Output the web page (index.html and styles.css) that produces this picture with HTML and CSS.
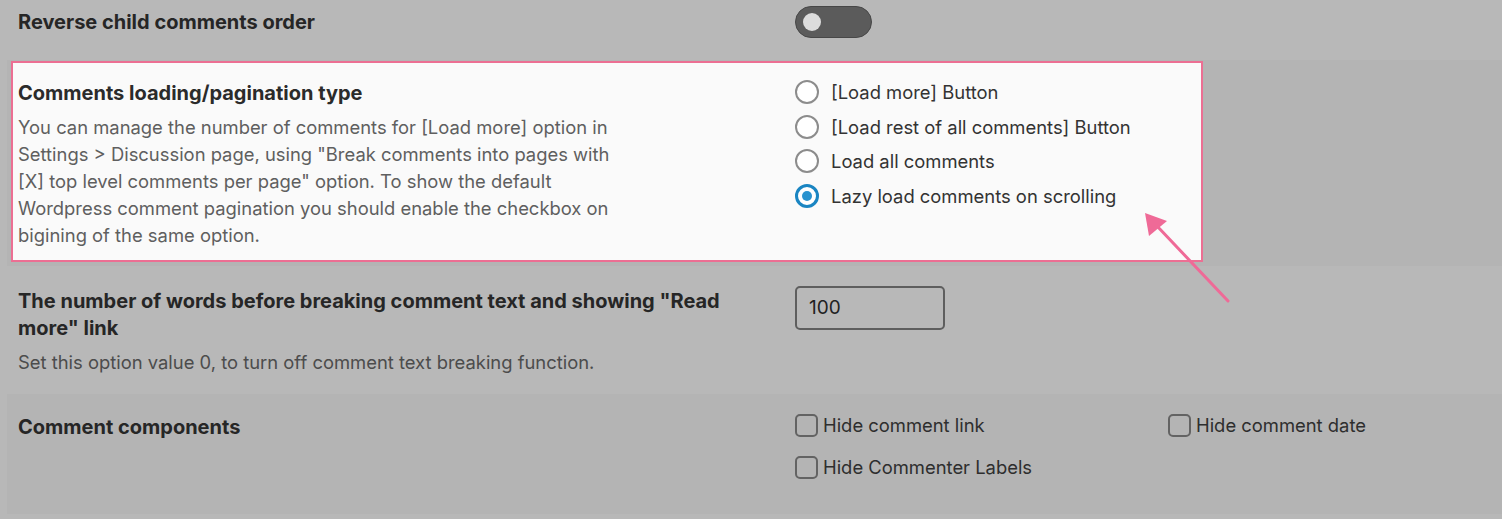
FILE: index.html
```html
<!DOCTYPE html>
<html>
<head>
    <title>Comment settings</title>
    <link rel="stylesheet" href="styles.css">
</head>
<body>
    <div class="settings">
        <div class="row row-first">
            <div class="label-col">
                <h3>Reverse child comments order</h3>
            </div>
            <div class="field-col">
                <span class="toggle"><span class="knob"></span></span>
            </div>
        </div>

        <div class="row striped row-focus">
            <div class="highlight">
                <div class="label-col">
                    <h3>Comments loading/pagination type</h3>
                    <p class="desc">You can manage the number of comments for [Load more] option in Settings &gt; Discussion page, using "Break comments into pages with [X] top level comments per page" option. To show the default Wordpress comment pagination you should enable the checkbox on bigining of the same option.</p>
                </div>
                <div class="field-col">
                    <ul class="radios">
                        <li><span class="radio"></span>[Load more] Button</li>
                        <li><span class="radio"></span>[Load rest of all comments] Button</li>
                        <li><span class="radio"></span>Load all comments</li>
                        <li><span class="radio checked"></span>Lazy load comments on scrolling</li>
                    </ul>
                </div>
            </div>
        </div>

        <div class="row row-words">
            <div class="label-col">
                <h3 class="wide">The number of words before breaking comment text and showing "Read more" link</h3>
                <p class="desc">Set this option value 0, to turn off comment text breaking function.</p>
            </div>
            <div class="field-col">
                <div class="number-input">100</div>
            </div>
        </div>

        <div class="row striped row-components">
            <div class="label-col">
                <h3>Comment components</h3>
            </div>
            <div class="field-col">
                <div class="checks">
                    <label><span class="checkbox"></span>Hide comment link</label>
                    <label><span class="checkbox"></span>Hide comment date</label>
                    <label><span class="checkbox"></span>Hide Commenter Labels</label>
                </div>
            </div>
        </div>
    </div>

    <!-- annotation arrow -->
    <svg class="arrow" width="100" height="100" viewBox="0 0 100 100">
        <line x1="88" y1="96" x2="17" y2="21" stroke="#ef6a97" stroke-width="3" stroke-linecap="round"/>
        <polygon points="5,8 27,16 9,31" fill="#ef6a97"/>
    </svg>
</body>
</html>
```

FILE: styles.css
```css
body {
    margin: 0;
    background-color: #b8b8b8;
    font-family: Inter, "Open Sans", sans-serif;
    color: #262626;
}
.settings {
    width: 1502px;
}
.row {
    display: flex;
    margin-left: 7px;
    padding-left: 11px;
}
.striped {
    background-color: #b4b4b4;
}
.label-col {
    width: 777px;
    flex-shrink: 0;
}
.field-col {
    flex: 1;
}
h3 {
    margin: 0;
    font-size: 20px;
    line-height: 27px;
    font-weight: 700;
    color: #262626;
}
h3.wide {
    max-width: 745px;
}
.desc {
    margin: 7px 0 0;
    font-size: 18.4px;
    line-height: 27px;
    color: #4c4c4c;
}

/* row 1 */
.row-first {
    height: 60px;
    box-sizing: border-box;
}
.row-first .label-col {
    padding-top: 9px;
}
.row-first .field-col {
    padding-top: 6px;
}
.toggle {
    display: block;
    width: 77px;
    height: 32px;
    box-sizing: border-box;
    border-radius: 16px;
    background: #5b5b5b;
    border: 1px solid #474747;
    position: relative;
}
.knob {
    position: absolute;
    left: 7px;
    top: 6px;
    width: 18px;
    height: 18px;
    border-radius: 50%;
    background: #dcdcdc;
}

/* highlighted row */
.row-focus {
    padding: 1px 0 4px 4px;
    height: 206px;
    box-sizing: border-box;
}
.highlight {
    display: flex;
    width: 1192px;
    box-sizing: border-box;
    border: 2px solid #ec6f93;
    background: #fafafa;
    padding: 17px 0 10px 5px;
}
.highlight h3 {
    color: #2b2b2b;
}
.highlight .desc {
    max-width: 615px;
    color: #5f5f5f;
}
.radios {
    list-style: none;
    margin: -5px 0 0;
    padding: 0;
}
.radios li {
    display: flex;
    align-items: center;
    height: 34.5px;
    font-size: 18.4px;
    color: #333;
}
.radio {
    width: 24px;
    height: 24px;
    box-sizing: border-box;
    border: 2px solid #8c8c8c;
    border-radius: 50%;
    margin-right: 12px;
    background: #fff;
}
.radio.checked {
    border: 3px solid #1a85c2;
    position: relative;
}
.radio.checked::after {
    content: "";
    position: absolute;
    left: 4px;
    top: 4px;
    width: 10px;
    height: 10px;
    border-radius: 50%;
    background: #2a93cf;
}

/* words row */
.row-words {
    padding-top: 20px;
    padding-bottom: 18px;
}
.row-words .label-col {
    padding-top: 2px;
}
.number-input {
    width: 150px;
    height: 44px;
    box-sizing: border-box;
    border: 2px solid #5e5e5e;
    border-radius: 5px;
    padding: 0 12px;
    line-height: 40px;
    font-size: 19px;
    color: #222;
}

/* components row */
.row-components {
    height: 120px;
    box-sizing: border-box;
    padding-top: 20px;
}
.checks {
    display: grid;
    grid-template-columns: 373px 1fr;
    row-gap: 18px;
    margin-top: -1px;
}
.checks label {
    display: flex;
    align-items: center;
    height: 24px;
    font-size: 18.4px;
    color: #2e2e2e;
}
.checkbox {
    width: 23px;
    height: 23px;
    box-sizing: border-box;
    border: 2px solid #636363;
    border-radius: 5px;
    margin-right: 5px;
}

.arrow {
    position: absolute;
    left: 1140px;
    top: 205px;
}
```
